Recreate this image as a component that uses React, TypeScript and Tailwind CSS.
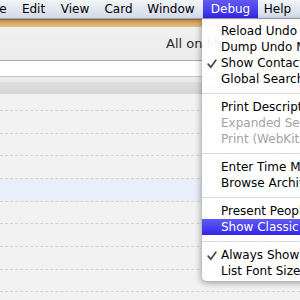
import React from 'react';

type Item = { label?: string; sep?: boolean; checked?: boolean; disabled?: boolean; active?: boolean };

const menuItems: Item[] = [
  { label: 'Reload Undo Stack' },
  { label: 'Dump Undo Manager' },
  { label: 'Show Contact Details', checked: true },
  { label: 'Global Search Field' },
  { sep: true },
  { label: 'Print Description' },
  { label: 'Expanded Selection', disabled: true },
  { label: 'Print (WebKit)', disabled: true },
  { sep: true },
  { label: 'Enter Time Machine' },
  { label: 'Browse Archives' },
  { sep: true },
  { label: 'Present People Picker' },
  { label: 'Show Classic Layout', active: true },
  { sep: true },
  { label: 'Always Show Groups', checked: true },
  { label: 'List Font Size' },
];

const barItems = [
  { label: 'File', cls: 'ml-[-22px] w-[37px]' },
  { label: 'Edit', cls: 'w-[37px]' },
  { label: 'View', cls: 'w-[46px]' },
  { label: 'Card', cls: 'w-[41px]' },
  { label: 'Window', cls: 'w-[64px]' },
  { label: 'Debug', cls: 'w-[55px]', active: true },
  { label: 'Help', cls: 'w-[39px]' },
];

const Check = ({ light }: { light?: boolean }) => (
  <svg width="10" height="10" viewBox="0 0 10 10" className="absolute left-[5px] top-[4px]">
    <path d="M1.2 5.2 L3.8 8.2 L8.8 1.3" fill="none" stroke={light ? '#fff' : '#4d4d4d'} strokeWidth="1.8" strokeLinecap="round" strokeLinejoin="round" />
  </svg>
);

const App: React.FC = () => {
  const rows = Array.from({ length: 10 });
  return (
    <div className="relative w-[300px] h-[300px] overflow-hidden bg-[#f2f2f2] font-['DejaVu_Sans',sans-serif]">
      {/* Menu bar */}
      <div className="flex h-[19px] border-b border-[#9ea6b2] bg-gradient-to-b from-[#f2f5fa] to-[#d2dae7] text-[12px] leading-[19px] text-black whitespace-nowrap">
        {barItems.map(b => (
          <div
            key={b.label}
            className={`${b.cls} shrink-0 text-center ${b.active ? 'bg-gradient-to-b from-[#6259f4] to-[#3422e4] text-white' : ''}`}
          >
            {b.label}
          </div>
        ))}
      </div>

      {/* Wood strip */}
      <div className="h-[8px] border-t border-[#8d6a3e] bg-gradient-to-b from-[#c08c4c] via-[#dcab66] to-[#e6bd82]" />

      {/* Toolbar */}
      <div className="flex h-[34px] items-center border-b border-[#a9a9a9] bg-gradient-to-b from-[#f1f1f1] to-[#ebebeb] pl-[166px] text-[13px] leading-[15px] text-[#2a2a2a] whitespace-nowrap">
        All on My Mac
      </div>

      {/* Search field */}
      <div className="h-[16px] border-b border-[#c4c4c4] bg-white" />
      <div className="h-[5px] bg-[#ebebeb]" />
      <div className="h-[12px] bg-gradient-to-b from-[#dedede] to-[#d6d6d6]" />

      {/* List */}
      <div className="flex flex-col">
        <div className="h-[17px] border-b border-dashed border-[#d3d3d3]" />
        {rows.map((_, i) => (
          <div
            key={i}
            className={`h-[22.67px] shrink-0 border-b border-dashed border-[#d3d3d3] ${i === 3 ? 'bg-[#e9eefb]' : ''}`}
          />
        ))}
      </div>

      {/* Debug menu */}
      <div className="absolute left-[202px] top-[19px] w-[140px] rounded-b-[5px] bg-[rgba(255,255,255,0.95)] pt-[4px] pb-[2px] text-[12px] leading-[16px] text-black shadow-[-1px_2px_6px_rgba(0,0,0,0.35)]">
        {menuItems.map((it, i) =>
          it.sep ? (
            <div key={i} className="flex h-[12px] items-center">
              <div className="h-px w-full bg-[#dadada]" />
            </div>
          ) : (
            <div
              key={i}
              className={`relative h-[16px] whitespace-nowrap pl-[19px] ${
                it.active ? 'bg-gradient-to-b from-[#6259f4] to-[#3422e4] text-white' : it.disabled ? 'text-[#a3a3a3]' : ''
              }`}
            >
              {it.checked && <Check light={it.active} />}
              {it.label}
            </div>
          )
        )}
      </div>
    </div>
  );
};

export default App;
